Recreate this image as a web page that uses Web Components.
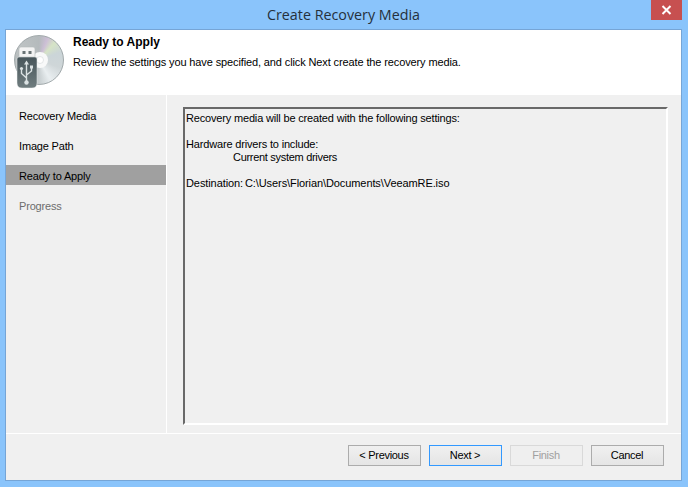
<!DOCTYPE html>
<html>
<head>
<meta charset="utf-8">
<title>Create Recovery Media</title>
<style>
  html, body { margin: 0; padding: 0; height: 100%; }
  body { background: #8ac4fb; font-family: "Liberation Sans", Arial, sans-serif; overflow: hidden; }
  .indent { padding-left: 47px; letter-spacing: -0.3px; }
  .path { letter-spacing: -0.09px; word-spacing: -1px; }
  summary-panel p { margin: 0 0 13px; }
</style>
</head>
<body>
<wizard-window title="Create Recovery Media">
  <wizard-header slot="header" heading="Ready to Apply" text="Review the settings you have specified, and click Next create the recovery media."></wizard-header>
  <wizard-step slot="steps">Recovery Media</wizard-step>
  <wizard-step slot="steps">Image Path</wizard-step>
  <wizard-step slot="steps" selected>Ready to Apply</wizard-step>
  <wizard-step slot="steps" disabled>Progress</wizard-step>
  <summary-panel slot="content">
    <p>Recovery media will be created with the following settings:</p>
    <p>Hardware drivers to include:<br><span class="indent">Current system drivers</span></p>
    <p class="path">Destination: C:\Users\Florian\Documents\VeeamRE.iso</p>
  </summary-panel>
  <wizard-button slot="buttons">&lt; Previous</wizard-button>
  <wizard-button slot="buttons" focused>Next &gt;</wizard-button>
  <wizard-button slot="buttons" disabled>Finish</wizard-button>
  <wizard-button slot="buttons">Cancel</wizard-button>
</wizard-window>

<script>
class WizardWindow extends HTMLElement {
  constructor() {
    super();
    this.attachShadow({ mode: "open" });
  }

  connectedCallback() {
    const title = this.getAttribute("title") || "";

    this.shadowRoot.innerHTML = `
      <style>
        :host {
          display: flex;
          flex-direction: column;
          box-sizing: border-box;
          width: 688px;
          height: 487px;
          background: #8ac4fb;
          padding: 0 6px 6px 5px;
          color: #000000;
          font-family: "Liberation Sans", Arial, sans-serif;
          --ui-size: 11px;
          --ui-spacing: -0.17px;
        }

        .titlebar {
          height: 29px;
          flex: none;
          display: flex;
          justify-content: space-between;
        }

        .title {
          flex: 1;
          padding: 5px 0 0 31px;
          text-align: center;
          font-family: "Open Sans", sans-serif;
          font-size: 14.3px;
          line-height: 20px;
          color: #25303b;
        }

        .close {
          width: 31px;
          height: 20px;
          background: #c75050;
          display: flex;
          align-items: center;
          justify-content: center;
        }

        .body {
          flex: 1;
          display: flex;
          flex-direction: column;
          min-height: 0;
          border: 1px solid #76a5d6;
          background: #f0f0f0;
        }

        .middle {
          flex: 1;
          display: flex;
          min-height: 0;
          border-bottom: 1px solid #ffffff;
        }

        .steps {
          width: 160px;
          flex: none;
          padding-top: 10px;
          border-right: 1px solid #ffffff;
          display: flex;
          flex-direction: column;
          gap: 10px;
        }

        .content {
          flex: 1;
          display: flex;
          padding: 12px 13px 8px 16px;
          min-width: 0;
        }

        .footer {
          height: 46px;
          flex: none;
          display: flex;
          justify-content: flex-end;
          gap: 8px;
          padding: 11px 17px 0 0;
          box-sizing: border-box;
        }
      </style>

      <div class="titlebar">
        <div class="title">${title}</div>
        <div class="close">
          <svg width="11" height="10" viewBox="0 0 11 10">
            <path d="M1.5 1 L9.5 9 M9.5 1 L1.5 9" stroke="#ffffff" stroke-width="2" fill="none"/>
          </svg>
        </div>
      </div>
      <div class="body">
        <slot name="header"></slot>
        <div class="middle">
          <div class="steps"><slot name="steps"></slot></div>
          <div class="content"><slot name="content"></slot></div>
        </div>
        <div class="footer"><slot name="buttons"></slot></div>
      </div>
    `;
  }
}

class WizardHeader extends HTMLElement {
  constructor() {
    super();
    this.attachShadow({ mode: "open" });
  }

  connectedCallback() {
    const heading = this.getAttribute("heading") || "";
    const text = this.getAttribute("text") || "";

    this.shadowRoot.innerHTML = `
      <style>
        :host {
          display: flex;
          box-sizing: border-box;
          height: 65px;
          flex: none;
          background: #ffffff;
          padding: 4px 0 0 7px;
        }

        .icon {
          flex: none;
          display: grid;
          width: 52px;
          height: 56px;
        }

        .icon > * {
          grid-area: 1 / 1;
        }

        .disc {
          box-sizing: border-box;
          width: 50px;
          height: 50px;
          margin: 1px 0 0 1px;
          border-radius: 50%;
          border: 1px solid #a1a9ab;
          background: conic-gradient(
            #b4babc 0deg,
            #cdbfd6 22deg,
            #d6e4c6 42deg,
            #cbd5d8 70deg,
            #cfd6d8 110deg,
            #e9eef0 150deg,
            #bcc3c5 190deg,
            #b0b6b8 240deg,
            #bec3c4 300deg,
            #b4babc 360deg
          );
        }

        svg {
          width: 52px;
          height: 56px;
        }

        .text {
          padding: 1px 0 0 8px;
        }

        h1 {
          margin: 0;
          font-size: 12px;
          line-height: 15px;
          font-weight: bold;
        }

        p {
          margin: 4px 0 0;
          font-size: var(--ui-size);
          letter-spacing: -0.12px;
          line-height: 16px;
        }
      </style>

      <div class="icon">
        <div class="disc"></div>
        <svg viewBox="0 0 52 56">
          <defs>
            <linearGradient id="stick" x1="0" y1="0" x2="0" y2="1">
              <stop offset="0" stop-color="#47555a"/>
              <stop offset="1" stop-color="#707d7f"/>
            </linearGradient>
          </defs>
          <circle cx="27" cy="26" r="8" fill="#f8f9f9"/>
          <circle cx="27" cy="26" r="3.5" fill="#ffffff" stroke="#d2d7d8" stroke-width="0.6"/>
          <path d="M6 23 V15 Q6 13 8 13 H20 Q22 13 22 15 V23 Z" fill="#f3f3f3" stroke="#b4babb" stroke-width="0.6"/>
          <rect x="9.5" y="17" width="3" height="3" fill="#687274"/>
          <rect x="15.5" y="17" width="3" height="3" fill="#687274"/>
          <path d="M4 25 Q4 23 6 23 H22 Q24 23 24 25 V49 Q24 54 19 54 H9 Q4 54 4 49 Z" fill="url(#stick)" stroke="#eef1f1" stroke-width="0.5"/>
          <path d="M13.5 29 V48 M13.5 44 L8.5 39.5 V35.5 M13.5 41 L18.5 37 V33.5" stroke="#dbe2e3" stroke-width="1.4" fill="none"/>
          <path d="M13.5 26.5 L16 30.5 H11 Z" fill="#dbe2e3"/>
          <circle cx="13.5" cy="48.5" r="2.2" fill="#dbe2e3"/>
          <circle cx="8.5" cy="34.5" r="1.6" fill="#dbe2e3"/>
          <rect x="17" y="31.5" width="3" height="3" fill="#dbe2e3"/>
        </svg>
      </div>
      <div class="text">
        <h1>${heading}</h1>
        <p>${text}</p>
      </div>
    `;
  }
}

class WizardStep extends HTMLElement {
  constructor() {
    super();
    this.attachShadow({ mode: "open" });
    this.shadowRoot.innerHTML = `
      <style>
        :host {
          display: block;
          box-sizing: border-box;
          height: 20px;
          padding: 1px 0 0 13px;
          font-size: var(--ui-size);
          letter-spacing: var(--ui-spacing);
          line-height: 20px;
          color: #000000;
        }

        :host([selected]) {
          background: #a0a0a0;
        }

        :host([disabled]) {
          color: #6d6d6d;
        }
      </style>
      <slot></slot>
    `;
  }
}

class SummaryPanel extends HTMLElement {
  constructor() {
    super();
    this.attachShadow({ mode: "open" });
    this.shadowRoot.innerHTML = `
      <style>
        :host {
          display: block;
          box-sizing: border-box;
          width: 100%;
          height: 100%;
          background: #f0f0f0;
          border-style: solid;
          border-width: 2px;
          border-color: #696969 #ffffff #ffffff #696969;
          padding: 3px 1px;
          font-size: var(--ui-size);
          letter-spacing: var(--ui-spacing);
          line-height: 13px;
        }
      </style>
      <slot></slot>
    `;
  }
}

class WizardButton extends HTMLElement {
  constructor() {
    super();
    this.attachShadow({ mode: "open" });
    this.shadowRoot.innerHTML = `
      <style>
        :host {
          display: block;
          box-sizing: border-box;
          width: 73px;
          height: 21px;
          padding-right: 1px;
          border: 1px solid #acacac;
          background: linear-gradient(#f0f0f0, #e5e5e5);
          text-align: center;
          font-size: var(--ui-size);
          letter-spacing: -0.3px;
          line-height: 19px;
          color: #000000;
        }

        :host([focused]) {
          border-color: #3399ff;
        }

        :host([disabled]) {
          border-color: #d9d9d9;
          background: #efefef;
          color: #a0a0a0;
        }
      </style>
      <slot></slot>
    `;
  }
}

customElements.define("wizard-window", WizardWindow);
customElements.define("wizard-header", WizardHeader);
customElements.define("wizard-step", WizardStep);
customElements.define("summary-panel", SummaryPanel);
customElements.define("wizard-button", WizardButton);
</script>
</body>
</html>
